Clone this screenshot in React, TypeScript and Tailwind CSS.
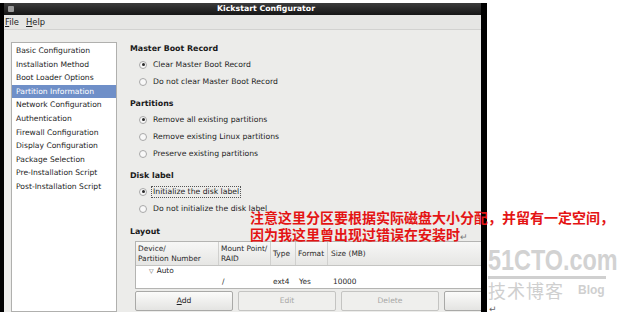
import React from "react";

const font = { fontFamily: '"DejaVu Sans", "Noto Sans", sans-serif' };

function Radio({ checked, label, focus }: { checked?: boolean; label: string; focus?: boolean }) {
  return (
    <div className="flex h-[17px] items-center pl-[9px]">
      <span className="flex h-[8px] w-[8px] items-center justify-center rounded-full border border-[#a8a8a8] bg-[#f8f8f8]">
        {checked && <span className="h-[3px] w-[3px] rounded-full bg-[#2a2a2a]" />}
      </span>
      <span
        className={
          "ml-[4px] text-[7.7px] leading-[10px] text-[#1e1e1e] " +
          (focus ? "border border-dotted border-[#555] px-[1px]" : "border border-transparent px-[1px]")
        }
      >
        {label}
      </span>
    </div>
  );
}

function Heading({ children, mt }: { children: React.ReactNode; mt: string }) {
  return <div className={"flex h-[14px] items-center text-[7.9px] font-bold text-[#1a1a1a] " + mt}>{children}</div>;
}

const items = [
  "Basic Configuration",
  "Installation Method",
  "Boot Loader Options",
  "Partition Information",
  "Network Configuration",
  "Authentication",
  "Firewall Configuration",
  "Display Configuration",
  "Package Selection",
  "Pre-Installation Script",
  "Post-Installation Script",
];

export default function App() {
  return (
    <div className="relative flex h-[315px] w-[620px] overflow-hidden bg-white" style={font}>
      {/* window */}
      <div className="mt-[3px] flex h-[309px] w-[487px] shrink-0 flex-col border-l-[4px] border-r-[6px] border-black bg-[#ececea]">
        {/* title bar */}
        <div className="flex h-[12px] items-center bg-gradient-to-b from-[#3c3c3c] to-[#161616] pl-[4px]">
          <span className="h-[6px] w-[6px] rounded-[1px] bg-[#9a9a9a]" />
          <span className="ml-[203px] text-[7.8px] font-bold leading-none text-white">Kickstart Configurator</span>
        </div>
        {/* menu bar */}
        <div className="flex h-[15px] items-center gap-[7px] border-b border-[#d2d2d0] bg-[#e6e6e4] pl-[1px] text-[8.4px] text-[#1e1e1e]">
          <span>
            <span className="underline">F</span>ile
          </span>
          <span>
            <span className="underline">H</span>elp
          </span>
        </div>
        {/* body */}
        <div className="flex flex-1 overflow-hidden">
          {/* left list */}
          <div className="ml-[7px] mt-[12px] w-[106px] shrink-0 border border-[#b0b0ae] bg-white pt-[1px]">
            {items.map((it) => (
              <div
                key={it}
                className={
                  "flex h-[13.6px] items-center pl-[4px] text-[7.6px] " +
                  (it === "Partition Information" ? "bg-[#6f8fc8] text-white" : "text-[#1e1e1e]")
                }
              >
                {it}
              </div>
            ))}
          </div>
          {/* right panel */}
          <div className="ml-[13px] flex min-w-0 flex-1 flex-col pt-[12px]">
            <Heading mt="">Master Boot Record</Heading>
            <Radio checked label="Clear Master Boot Record" />
            <Radio label="Do not clear Master Boot Record" />
            <Heading mt="mt-[7px]">Partitions</Heading>
            <Radio checked label="Remove all existing partitions" />
            <Radio label="Remove existing Linux partitions" />
            <Radio label="Preserve existing partitions" />
            <Heading mt="mt-[7px]">Disk label</Heading>
            <Radio checked focus label="Initialize the disk label" />
            <Radio label="Do not initialize the disk label" />
            <Heading mt="mt-[8px]">Layout</Heading>
            {/* table */}
            <div className="ml-[5px] mt-[2px] h-[48px] w-[360px] shrink-0 border border-[#b4b4b2] bg-white text-[7.4px] text-[#2a2a2a]">
              <div className="flex h-[24px] border-b border-[#c4c4c2] bg-gradient-to-b from-[#f7f7f6] to-[#e6e6e4]">
                <div className="flex w-[83px] flex-col justify-center border-r border-[#d0d0ce] pl-[2px] leading-[10px]">
                  <span>Device/</span>
                  <span>Partition Number</span>
                </div>
                <div className="flex w-[52px] flex-col justify-center border-r border-[#d0d0ce] pl-[2px] leading-[10px]">
                  <span>Mount Point/</span>
                  <span>RAID</span>
                </div>
                <div className="flex w-[25px] items-center border-r border-[#d0d0ce] pl-[2px]">Type</div>
                <div className="flex w-[32px] items-center border-r border-[#d0d0ce] pl-[2px]">Format</div>
                <div className="flex flex-1 items-center pl-[3px]">Size (MB)</div>
              </div>
              <div className="flex h-[10px] items-center pl-[13px] leading-none">
                <span className="text-[6px] text-[#555]">▽</span>
                <span className="ml-[3px]">Auto</span>
              </div>
              <div className="flex h-[12px] items-center leading-none">
                <span className="w-[83px]" />
                <span className="w-[52px] pl-[3px]">/</span>
                <span className="w-[25px] pl-[2px]">ext4</span>
                <span className="w-[32px] pl-[3px]">Yes</span>
                <span className="pl-[5px]">10000</span>
              </div>
            </div>
            {/* buttons */}
            <div className="ml-[5px] mt-[2px] flex gap-[5px]">
              <div className="flex h-[20px] w-[98px] shrink-0 items-center justify-center rounded-[2px] border border-[#a9a9a7] bg-gradient-to-b from-[#fbfbfa] to-[#e4e4e2] text-[7.6px] text-[#1e1e1e]">
                <span>
                  <span className="underline">A</span>dd
                </span>
              </div>
              <div className="flex h-[20px] w-[98px] shrink-0 items-center justify-center rounded-[2px] border border-[#c4c4c2] bg-[#efefed] text-[7.6px] text-[#a8a8a6]">
                Edit
              </div>
              <div className="flex h-[20px] w-[98px] shrink-0 items-center justify-center rounded-[2px] border border-[#c4c4c2] bg-[#efefed] text-[7.6px] text-[#a8a8a6]">
                Delete
              </div>
              <div className="flex h-[20px] w-[98px] shrink-0 items-center justify-center rounded-[2px] border border-[#a9a9a7] bg-gradient-to-b from-[#fbfbfa] to-[#e4e4e2]" />
            </div>
          </div>
        </div>
      </div>

      {/* watermark area */}
      <div className="flex min-w-0 flex-1 flex-col pl-[1px] pt-[245px]">
        <div className="w-[118px] border-b-[3px] border-[#d0d0d0] pb-[1px]">
          <div
            className="origin-left scale-x-[0.78] whitespace-nowrap text-[30px] font-bold leading-[30px] text-[#d2d2d2]"
            style={{ fontFamily: '"Liberation Sans", sans-serif' }}
          >
            51CTO.com
          </div>
        </div>
        <div className="mt-[1px] flex items-center text-[#cfcfcf]">
          <span className="text-[18px] leading-[21px] tracking-[1px]" style={{ fontFamily: '"Noto Sans CJK SC", sans-serif' }}>
            技术博客
          </span>
          <span className="ml-[14px] mt-[-2px] text-[12px] font-bold" style={{ fontFamily: '"Liberation Sans", sans-serif' }}>
            Blog
          </span>
        </div>
        <span className="ml-[1px] mt-[4px] text-[9px] leading-none text-[#666]">↵</span>
      </div>

      {/* annotation overlay */}
      <div
        className="absolute left-[250px] top-[209px] text-[14px] font-bold leading-[17px] text-[#e41414]"
        style={{ fontFamily: '"Noto Sans CJK SC", sans-serif' }}
      >
        <div className="whitespace-nowrap">注意这里分区要根据实际磁盘大小分配，并留有一定空间，</div>
        <div className="whitespace-nowrap">
          因为我这里曾出现过错误在安装时<span className="text-[9px] font-normal text-[#777]">↵</span>
        </div>
      </div>
    </div>
  );
}
